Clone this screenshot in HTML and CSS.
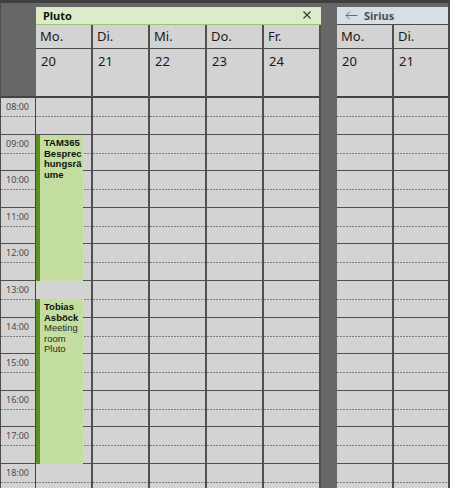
FILE: index.html
```html
<!DOCTYPE html>
<html lang="de">
<head>
<meta charset="utf-8">
<title>Kalender</title>
<link rel="stylesheet" href="styles.css">
</head>
<body>
<div class="frame">
  <div class="gutter">
    <div class="gutter-head"></div>
    <div class="gutter-body">
      <div class="row"><span class="time">08:00</span></div>
      <div class="row"><span class="time">09:00</span></div>
      <div class="row"><span class="time">10:00</span></div>
      <div class="row"><span class="time">11:00</span></div>
      <div class="row"><span class="time">12:00</span></div>
      <div class="row"><span class="time">13:00</span></div>
      <div class="row"><span class="time">14:00</span></div>
      <div class="row"><span class="time">15:00</span></div>
      <div class="row"><span class="time">16:00</span></div>
      <div class="row"><span class="time">17:00</span></div>
      <div class="row"><span class="time">18:00</span></div>
    </div>
  </div>

  <div class="pane pane-pluto">
    <div class="pane-title title-green">
      <span class="title-text">Pluto</span>
      <svg class="close" width="8" height="8" viewBox="0 0 8 8"><path d="M0.5 0.5L7.5 7.5M7.5 0.5L0.5 7.5" stroke="#333" stroke-width="1.1" fill="none"/></svg>
    </div>
    <div class="cols">
      <div class="col">
        <div class="day-name">Mo.</div>
        <div class="day-date">20</div>
        <div class="col-body">
          <div class="row"></div><div class="row"></div><div class="row"></div><div class="row"></div>
          <div class="row"></div><div class="row"></div><div class="row"></div><div class="row"></div>
          <div class="row"></div><div class="row"></div><div class="row"></div>
          <div class="event ev-1"><div class="ev-title">TAM365 Besprechungsräume</div></div>
          <div class="event ev-2"><div class="ev-title">Tobias Asböck</div><div class="ev-loc">Meeting room Pluto</div></div>
        </div>
      </div>
      <div class="col">
        <div class="day-name">Di.</div>
        <div class="day-date">21</div>
        <div class="col-body">
          <div class="row"></div><div class="row"></div><div class="row"></div><div class="row"></div>
          <div class="row"></div><div class="row"></div><div class="row"></div><div class="row"></div>
          <div class="row"></div><div class="row"></div><div class="row"></div>
        </div>
      </div>
      <div class="col">
        <div class="day-name">Mi.</div>
        <div class="day-date">22</div>
        <div class="col-body">
          <div class="row"></div><div class="row"></div><div class="row"></div><div class="row"></div>
          <div class="row"></div><div class="row"></div><div class="row"></div><div class="row"></div>
          <div class="row"></div><div class="row"></div><div class="row"></div>
        </div>
      </div>
      <div class="col">
        <div class="day-name">Do.</div>
        <div class="day-date">23</div>
        <div class="col-body">
          <div class="row"></div><div class="row"></div><div class="row"></div><div class="row"></div>
          <div class="row"></div><div class="row"></div><div class="row"></div><div class="row"></div>
          <div class="row"></div><div class="row"></div><div class="row"></div>
        </div>
      </div>
      <div class="col">
        <div class="day-name">Fr.</div>
        <div class="day-date">24</div>
        <div class="col-body">
          <div class="row"></div><div class="row"></div><div class="row"></div><div class="row"></div>
          <div class="row"></div><div class="row"></div><div class="row"></div><div class="row"></div>
          <div class="row"></div><div class="row"></div><div class="row"></div>
        </div>
      </div>
    </div>
  </div>

  <div class="pane pane-sirius">
    <div class="pane-title title-blue">
      <svg class="back" width="13" height="9" viewBox="0 0 13 9"><path d="M12.5 4.5H1M4.8 0.7L1 4.5L4.8 8.3" stroke="#6a6a6a" stroke-width="1" fill="none"/></svg>
      <span class="title-text title-muted">Sirius</span>
    </div>
    <div class="cols">
      <div class="col">
        <div class="day-name">Mo.</div>
        <div class="day-date">20</div>
        <div class="col-body">
          <div class="row"></div><div class="row"></div><div class="row"></div><div class="row"></div>
          <div class="row"></div><div class="row"></div><div class="row"></div><div class="row"></div>
          <div class="row"></div><div class="row"></div><div class="row"></div>
        </div>
      </div>
      <div class="col">
        <div class="day-name">Di.</div>
        <div class="day-date">21</div>
        <div class="col-body">
          <div class="row"></div><div class="row"></div><div class="row"></div><div class="row"></div>
          <div class="row"></div><div class="row"></div><div class="row"></div><div class="row"></div>
          <div class="row"></div><div class="row"></div><div class="row"></div>
        </div>
      </div>
    </div>
  </div>
</div>
</body>
</html>
```

FILE: styles.css
```css
* { box-sizing: border-box; }

html, body {
  margin: 0;
  padding: 0;
  background: #676767;
}

body {
  font-family: "Noto Sans", "Open Sans", sans-serif;
  color: #1e1e1e;
}

.frame {
  width: 450px;
  height: 488px;
  overflow: hidden;
  display: flex;
  background: #676767;
  border-top: 3px solid #3f3f3f;
  border-left: 1px solid #4e4e4e;
  border-right: 2px solid #4a4a4a;
}

/* time gutter */
.gutter {
  width: 35px;
  flex: none;
  display: flex;
  flex-direction: column;
}

.gutter-head {
  height: 95px;
  flex: none;
  border-bottom: 2px solid #444;
}

.gutter-body {
  background: #d3d3d3;
  border-right: 1px solid #454545;
  flex: 1;
}

.row {
  height: 36.6px;
  border-bottom: 1px solid #4f4f4f;
  background-image: linear-gradient(90deg, #7d7d7d 2px, transparent 2px);
  background-size: 3px 1px;
  background-repeat: repeat-x;
  background-position: 0 18px;
}

.time {
  display: block;
  padding: 3px 0 0 5px;
  font-size: 9px;
  line-height: 11px;
  color: #4a4a4a;
}

/* panes */
.pane {
  flex: none;
  display: flex;
  flex-direction: column;
  padding-top: 4px;
}

.pane-pluto {
  width: 285px;
  margin-right: 16px;
}

.pane-sirius {
  width: 140px;
}

.pane-title {
  height: 18px;
  flex: none;
  display: flex;
  align-items: center;
  padding: 0 0 1px 7px;
  font-size: 11px;
  font-weight: 700;
}

.title-green {
  background: #dcecc9;
  border-bottom: 1px solid #9cc27a;
  padding-right: 10px;
  justify-content: space-between;
}

.title-blue {
  background: #d5dfe6;
  border-bottom: 1px solid #4a4a4a;
  padding-left: 8px;
  gap: 6px;
}

.title-text { color: #141414; }
.title-muted { color: #4d4d4d; }

.close { display: block; }
.back { display: block; }

.cols {
  display: flex;
  flex: 1;
}

.col {
  width: 57px;
  flex: none;
  display: flex;
  flex-direction: column;
  border-right: 2px solid #505050;
  background: #d3d3d3;
}

.day-name {
  height: 24px;
  flex: none;
  border-bottom: 1px solid #4a4a4a;
  padding: 2px 0 0 4px;
  font-size: 13px;
  line-height: 18px;
  color: #1a1a1a;
}

.day-date {
  height: 49px;
  flex: none;
  border-bottom: 2px solid #444;
  padding: 3px 0 0 5px;
  font-size: 13px;
  line-height: 18px;
  color: #1a1a1a;
}

.col-body {
  position: relative;
  flex: 1;
}

.event {
  position: absolute;
  left: 0;
  width: 47px;
  background: #c3dea0;
  border-left: 4px solid #5b8f1f;
  padding: 3px 0 0 4px;
  font-family: "Liberation Sans", Arial, sans-serif;
  font-size: 9.5px;
  line-height: 10.5px;
  color: #26301b;
  overflow-wrap: anywhere;
}

.ev-title { font-weight: 700; color: #111; }

.ev-1 { top: 37px; height: 146px; }
.ev-2 { top: 201px; height: 165px; }
```
